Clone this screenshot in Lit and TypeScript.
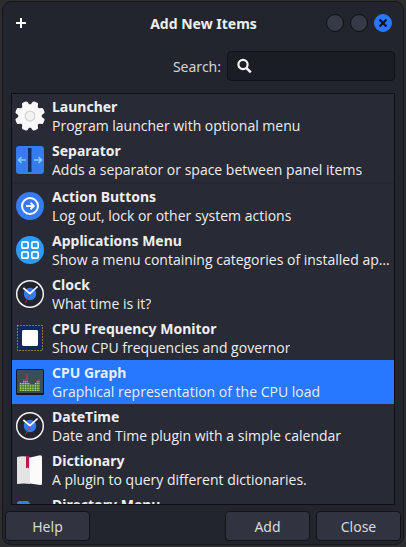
import { LitElement, html, css, svg, type TemplateResult } from "lit";
import { customElement, property, state } from "lit/decorators.js";
import { classMap } from "lit/directives/class-map.js";

interface Item {
  icon: string;
  name: string;
  text: string;
  group?: boolean;
}

const ITEMS: Item[] = [
  { icon: "gear", name: "Launcher", text: "Program launcher with optional menu" },
  { icon: "separator", name: "Separator", text: "Adds a separator or space between panel items" },
  { icon: "action", name: "Action Buttons", text: "Log out, lock or other system actions", group: true },
  { icon: "apps", name: "Applications Menu", text: "Show a menu containing categories of installed applications" },
  { icon: "clock", name: "Clock", text: "What time is it?" },
  { icon: "chip", name: "CPU Frequency Monitor", text: "Show CPU frequencies and governor" },
  { icon: "graph", name: "CPU Graph", text: "Graphical representation of the CPU load" },
  { icon: "clock", name: "DateTime", text: "Date and Time plugin with a simple calendar" },
  { icon: "book", name: "Dictionary", text: "A plugin to query different dictionaries." },
  { icon: "folder", name: "Directory Menu", text: "" },
];

/** Lit cells per column of the CPU graph, left to right. */
const LOAD = [5, 5, 7, 7, 10, 5, 4, 4, 4, 5, 6, 7];

const GEAR_TEETH = [22.5, 67.5, 112.5, 157.5, 202.5, 247.5, 292.5, 337.5];

const ICONS: Record<string, TemplateResult> = {
  gear: svg`
    <g fill="#f8f8f8">
      <circle cx="14" cy="14" r="11.800"/>
      ${GEAR_TEETH.map(
        (a) => svg`<path transform=${`rotate(${a} 14 14)`} d="M10 4L11 .2Q11.300 -1 12.400 -1H15.600Q16.700 -1 17 .2L18 4Z"/>`
      )}
    </g>
    <circle cx="14" cy="14" r="4.900" fill="#f2f2f2" stroke="#d4d4d4" stroke-width="1.200"/>`,
  separator: svg`
    <rect width="28" height="28" rx="3" fill="#367bf0"/>
    <rect x="12" y="2" width="3.500" height="24" fill="#0f2c5e"/>
    <g stroke="#7fd0ff" stroke-width="1.600" fill="none">
      <path d="M10 14H3M5.500 11L2.500 14L5.500 17"/>
      <path d="M18 14H25M22.500 11L25.500 14L22.500 17"/>
    </g>`,
  action: svg`
    <circle cx="14" cy="14" r="14" fill="#367bf0"/>
    <g stroke="#fff" stroke-width="2" fill="none">
      <circle cx="14" cy="14" r="8"/>
      <path d="M10 14H17M14.500 10.800L17.700 14L14.500 17.200"/>
    </g>`,
  apps: svg`
    <circle cx="14" cy="14" r="14" fill="#2b9cfb"/>
    <g stroke="#fff" stroke-width="1.700" fill="none">
      <rect x="5.800" y="5.800" width="6.400" height="6.400" rx="1.800"/>
      <rect x="15.800" y="5.800" width="6.400" height="6.400" rx="1.800"/>
      <rect x="5.800" y="15.800" width="6.400" height="6.400" rx="1.800"/>
      <rect x="15.800" y="15.800" width="6.400" height="6.400" rx="1.800"/>
    </g>`,
  clock: svg`
    <circle cx="14" cy="14" r="13.300" fill="#23252e" stroke="#f4f4f4" stroke-width="1.500"/>
    <circle cx="14" cy="14" r="6.200" fill="#367bf0"/>
    <path d="M14.500 13.500L9.500 22.500" stroke="#b8324a" stroke-width="1"/>
    <path d="M7.300 8L14 13.600L21.600 6.500" stroke="#fff" stroke-width="1.700" fill="none"/>`,
  chip: svg`
    <rect x="2" y="2" width="24" height="24" fill="#12295a"/>
    <rect x="1.500" y="1.500" width="25" height="25" fill="none" stroke="#e8c648" stroke-width="1" stroke-dasharray="1 2"/>
    <rect x="6" y="6" width="16" height="16" fill="#fff"/>
    <g fill="#8a9cc0">
      <rect x="6" y="6" width="1" height="1"/><rect x="21" y="6" width="1" height="1"/>
      <rect x="6" y="21" width="1" height="1"/><rect x="21" y="21" width="1" height="1"/>
    </g>`,
  graph: svg`
    <rect y="1" width="28" height="26" rx="1.500" fill="#15191d"/>
    <rect x="1" y="2" width="26" height="23" fill="#3b4d57"/>
    ${LOAD.map((n, col) =>
      Array.from({ length: n }, (_, row) => {
        const fill = row < 4 ? "#a6ee4c" : row < 6 ? "#f5c518" : "#ee4428";
        return svg`<rect x=${3.8 + col * 1.68} y=${21.8 - row * 1.72} width="1.200" height="1.200" fill=${fill}/>`;
      })
    )}`,
  book: svg`
    <path d="M1 1Q8 -.5 14 1.500V28Q8 27 1 28Z" fill="#e4e4e4"/>
    <path d="M14 1.500L24 -.8Q26 -1 26 1V27.500Q26 29.500 24 29L14 27.500Z" fill="#fbfbfb"/>
    <path d="M10 .3H13V12.500L11.500 11.500L10 12.500Z" fill="#b8184c"/>`,
  folder: svg`
    <path d="M1 3.500Q1 1 3.500 1H12L14.500 4H25Q27 4 27 6V25H1Z" fill="#367bf0"/>`,
};

@customElement("plugin-row")
export class PluginRow extends LitElement {
  @property({ attribute: false }) item!: Item;

  static styles = css`
    :host {
      display: flex;
      align-items: center;
      gap: 8px;
      height: 44px;
      padding-left: 4px;
    }
    .icon {
      flex: none;
      width: 28px;
      height: 28px;
      overflow: visible;
    }
    .text {
      min-width: 0;
      min-height: 38px;
      line-height: 19px;
    }
    .name,
    .desc {
      overflow: hidden;
      text-overflow: ellipsis;
      white-space: nowrap;
    }
    .name {
      font-weight: 700;
    }
    .desc {
      font-family: "Open Sans", "Noto Sans", sans-serif;
    }
  `;

  render() {
    return html`
      <svg class="icon" viewBox="0 0 28 28" aria-hidden="true">${ICONS[this.item.icon]}</svg>
      <div class="text">
        <div class="name">${this.item.name}</div>
        <div class="desc">${this.item.text}</div>
      </div>
    `;
  }
}

@customElement("app-root")
export class AppRoot extends LitElement {
  @state() private selected = "CPU Graph";
  @state() private query = "";

  static styles = css`
    :host {
      display: block;
      box-sizing: border-box;
      height: 100vh;
      padding: 1px 2px 2px;
      background: #2b2d2f;
      color: #eeeef0;
      font: 14px/19px "Noto Sans", sans-serif;
    }
    * {
      box-sizing: border-box;
    }
    .window {
      display: flex;
      flex-direction: column;
      height: 100%;
      border: 1px solid #15171c;
      border-radius: 9px;
      background: #23252e;
      overflow: hidden;
    }
    .titlebar {
      display: grid;
      grid-template-columns: 1fr auto 1fr;
      align-items: center;
      flex: none;
      height: 42px;
      padding: 0 11px 0 12px;
    }
    .title {
      margin: 0;
      font-size: 14px;
      font-weight: 700;
    }
    .plus {
      width: 12px;
      height: 12px;
    }
    .controls {
      display: flex;
      justify-content: flex-end;
      gap: 6px;
    }
    .control {
      display: grid;
      place-items: center;
      width: 18px;
      height: 18px;
      padding: 0;
      border: 1px solid #0e0f13;
      border-radius: 50%;
      background: #363a46;
    }
    .control.close {
      border-color: #2777ff;
      background: #2777ff;
    }
    .search {
      display: flex;
      align-items: center;
      justify-content: flex-end;
      gap: 6px;
      flex: none;
      margin: 7px 8px 12px;
      color: #d3d4d8;
    }
    .field {
      display: flex;
      align-items: center;
      gap: 8px;
      width: 43%;
      min-width: 168px;
      height: 30px;
      padding: 0 8px;
      border: 1px solid #101217;
      border-radius: 4px;
      background: #1b1d24;
    }
    .glass {
      flex: none;
      width: 16px;
      height: 16px;
    }
    .input {
      flex: 1;
      min-width: 0;
      padding: 0;
      border: 0;
      outline: 0;
      background: none;
      color: #eeeef0;
      font: inherit;
    }
    .list {
      flex: 1;
      min-height: 0;
      margin: 0 8px;
      padding: 0;
      border: 1px solid #0e0f14;
      background: #282a35;
      list-style: none;
      overflow: hidden;
    }
    .entry.group {
      border-top: 2px solid #252731;
    }
    .entry.selected {
      background: #2777ff;
      color: #e4eeff;
    }
    .actions {
      display: flex;
      gap: 6px;
      flex: none;
      padding: 6px 2px 3px;
    }
    .button {
      width: 85px;
      height: 30px;
      padding: 0;
      border: 1px solid #111318;
      border-radius: 4px;
      background: #313440;
      color: #d8d9de;
      font: inherit;
    }
    .help {
      margin-right: auto;
    }
  `;

  private onInput(e: Event) {
    this.query = (e.target as HTMLInputElement).value;
  }

  render() {
    const q = this.query.toLowerCase();
    const items = ITEMS.filter((i) => `${i.name} ${i.text}`.toLowerCase().includes(q));
    return html`
      <main class="window">
        <header class="titlebar">
          <svg class="plus" viewBox="0 0 12 12" aria-hidden="true">
            <path d="M6 1V11M1 6H11" stroke="#fff" stroke-width="2" />
          </svg>
          <h1 class="title">Add New Items</h1>
          <div class="controls">
            <button class="control" aria-label="Minimize"></button>
            <button class="control" aria-label="Maximize"></button>
            <button class="control close" aria-label="Close window">
              <svg width="10" height="10" viewBox="0 0 10 10" aria-hidden="true">
                <path d="M1.500 1.500L8.500 8.500M8.500 1.500L1.500 8.500" stroke="#0b1020" stroke-width="2.200" />
              </svg>
            </button>
          </div>
        </header>
        <div class="search">
          <label for="query">Search:</label>
          <div class="field">
            <svg class="glass" viewBox="0 0 16 16" aria-hidden="true">
              <circle cx="7" cy="6.500" r="4.600" fill="none" stroke="#f2f2f2" stroke-width="2.200" />
              <path d="M10.300 9.800L14.800 14.300" stroke="#f2f2f2" stroke-width="2.600" />
            </svg>
            <input class="input" id="query" type="text" .value=${this.query} @input=${this.onInput} />
          </div>
        </div>
        <ul class="list" role="listbox" aria-label="Items">
          ${items.map(
            (item) => html`<li
              class=${classMap({ entry: true, group: !!item.group, selected: item.name === this.selected })}
              role="option"
              aria-selected=${item.name === this.selected}
              @click=${() => (this.selected = item.name)}
            >
              <plugin-row .item=${item}></plugin-row>
            </li>`
          )}
        </ul>
        <footer class="actions">
          <button class="button help">Help</button>
          <button class="button">Add</button>
          <button class="button">Close</button>
        </footer>
      </main>
    `;
  }
}
